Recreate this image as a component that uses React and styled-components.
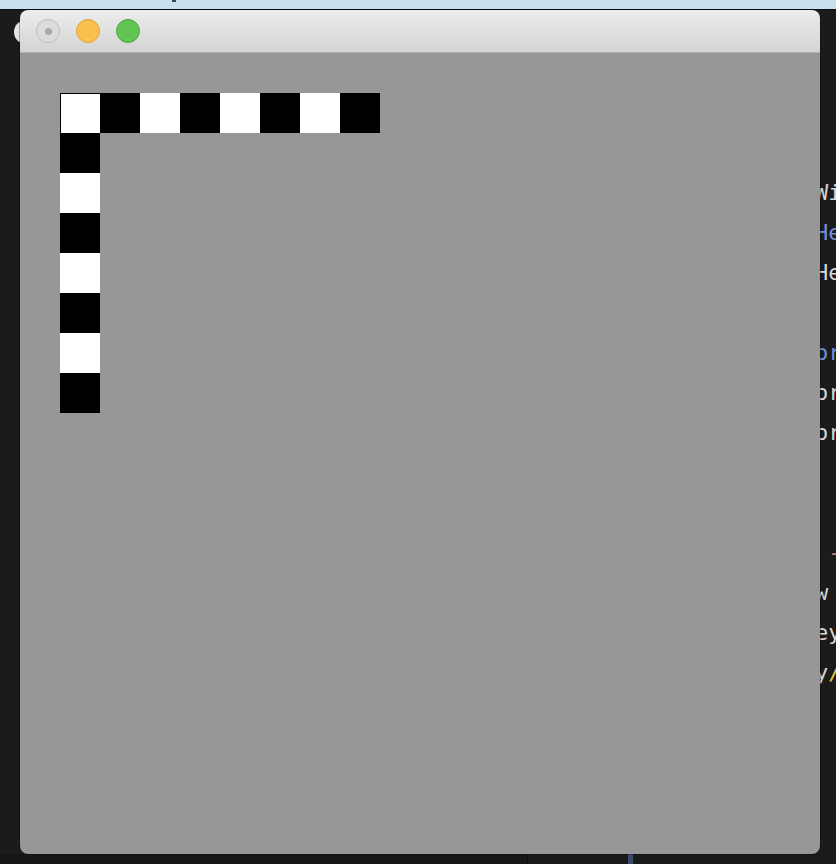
import React from "react";
import styled, { createGlobalStyle } from "styled-components";

const GlobalStyle = createGlobalStyle`
  html, body {
    margin: 0;
    padding: 0;
    background: #1b1b1b;
    overflow: hidden;
  }
  #root {
    width: 836px;
    height: 864px;
  }
`;

const Desktop = styled.div`
  position: relative;
  width: 836px;
  height: 864px;
  overflow: hidden;
  background: #1b1b1b;
  display: flex;
  flex-direction: column;
`;

const MenuStrip = styled.div`
  height: 9px;
  flex: none;
  background: #c9e1ef;
  border-bottom: 1px solid #0f0f0f;
  position: relative;
`;

const StripMark = styled.span`
  position: absolute;
  left: 172px;
  top: 0;
  width: 4px;
  height: 2px;
  background: #3a4550;
`;

const Editor = styled.div`
  flex: 1;
  display: flex;
  flex-direction: column;
  padding-top: 3px;
  font-family: "DejaVu Sans Mono", "Liberation Mono", monospace;
  font-size: 22px;
`;

const CodeLine = styled.div`
  height: 40px;
  line-height: 40px;
  padding-left: 815px;
  white-space: pre;
  color: ${({ $tone }) =>
    $tone === "blue"
      ? "#7190dc"
      : $tone === "orange"
      ? "#d9826a"
      : "#d6d6d6"};
`;

const Accent = styled.span`
  color: #e8c24a;
`;

const BottomBar = styled.div`
  height: 10px;
  flex: none;
  display: flex;
  margin-top: auto;
`;

const BottomLeft = styled.div`
  width: 527px;
  background: #161616;
  border-right: 1px solid #0c0c0c;
`;

const BottomRight = styled.div`
  flex: 1;
  background: #1a1a1a;
  padding-left: 100px;
`;

const Cursor = styled.div`
  width: 5px;
  height: 100%;
  background: #3c4a6c;
`;

const BackTrafficLight = styled.span`
  position: absolute;
  left: 14px;
  top: 20px;
  width: 24px;
  height: 24px;
  border-radius: 50%;
  background: #e4e4e4;
`;

const Window = styled.div`
  position: absolute;
  left: 20px;
  top: 10px;
  width: 800px;
  height: 844px;
  border-radius: 8px;
  overflow: hidden;
  display: flex;
  flex-direction: column;
  box-shadow: 0 0 0 1px rgba(0, 0, 0, 0.3);
`;

const TitleBar = styled.div`
  height: 42px;
  flex: none;
  background: linear-gradient(#ececec, #d4d4d4);
  border-bottom: 1px solid #b3b3b3;
  display: flex;
  align-items: center;
  gap: 16px;
  padding-left: 16px;
`;

const Light = styled.span`
  width: 22px;
  height: 22px;
  border-radius: 50%;
  display: flex;
  align-items: center;
  justify-content: center;
  background: ${({ $color }) =>
    $color === "yellow" ? "#fbbf4d" : $color === "green" ? "#60c554" : "#dcdcdc"};
  border: 1px solid
    ${({ $color }) =>
      $color === "yellow" ? "#dfa23a" : $color === "green" ? "#4aa73e" : "#bcbcbc"};
`;

const LightDot = styled.span`
  width: 7px;
  height: 7px;
  border-radius: 50%;
  background: #a8a8a8;
`;

const Content = styled.div`
  flex: 1;
  background: #979797;
  padding: 40px 0 0 40px;
`;

const Board = styled.div`
  display: flex;
  flex-direction: column;
  align-items: flex-start;
`;

const Row = styled.div`
  display: flex;
  background: #000;
`;

const Column = styled.div`
  display: flex;
  flex-direction: column;
`;

const Cell = styled.div`
  width: 40px;
  height: 40px;
  box-sizing: border-box;
  background: ${({ $white }) => ($white ? "#fff" : "#000")};
  border: ${({ $edge }) => ($edge ? "1px solid #000" : "none")};
  border-right: none;
  border-bottom: none;
`;

const code = [
  { text: "" },
  { text: "" },
  { text: "" },
  { text: "" },
  { text: "Width" },
  { text: "Height", tone: "blue" },
  { text: "Height" },
  { text: "" },
  { text: "orient", tone: "blue" },
  { text: "orient" },
  { text: "orient" },
  { text: "" },
  { text: "" },
  { text: " -", tone: "orange" },
  { text: "w" },
  { text: "eys" },
  { text: "y", accent: "/" },
];

const topRow = Array.from({ length: 8 }, (_, i) => i % 2 === 0);
const sideColumn = Array.from({ length: 7 }, (_, i) => i % 2 === 1);

const App = () => (
  <>
    <GlobalStyle />
    <Desktop>
      <MenuStrip>
        <StripMark />
      </MenuStrip>
      <Editor>
        {code.map((line, i) => (
          <CodeLine key={i} $tone={line.tone}>
            {line.text}
            {line.accent && <Accent>{line.accent}</Accent>}
          </CodeLine>
        ))}
      </Editor>
      <BottomBar>
        <BottomLeft />
        <BottomRight>
          <Cursor />
        </BottomRight>
      </BottomBar>

      <BackTrafficLight />

      <Window>
        <TitleBar>
          <Light>
            <LightDot />
          </Light>
          <Light $color="yellow" />
          <Light $color="green" />
        </TitleBar>
        <Content>
          <Board>
            <Row>
              {topRow.map((white, i) => (
                <Cell key={i} $white={white} $edge={i === 0} />
              ))}
            </Row>
            <Column>
              {sideColumn.map((white, i) => (
                <Cell key={i} $white={white} />
              ))}
            </Column>
          </Board>
        </Content>
      </Window>
    </Desktop>
  </>
);

export default App;
